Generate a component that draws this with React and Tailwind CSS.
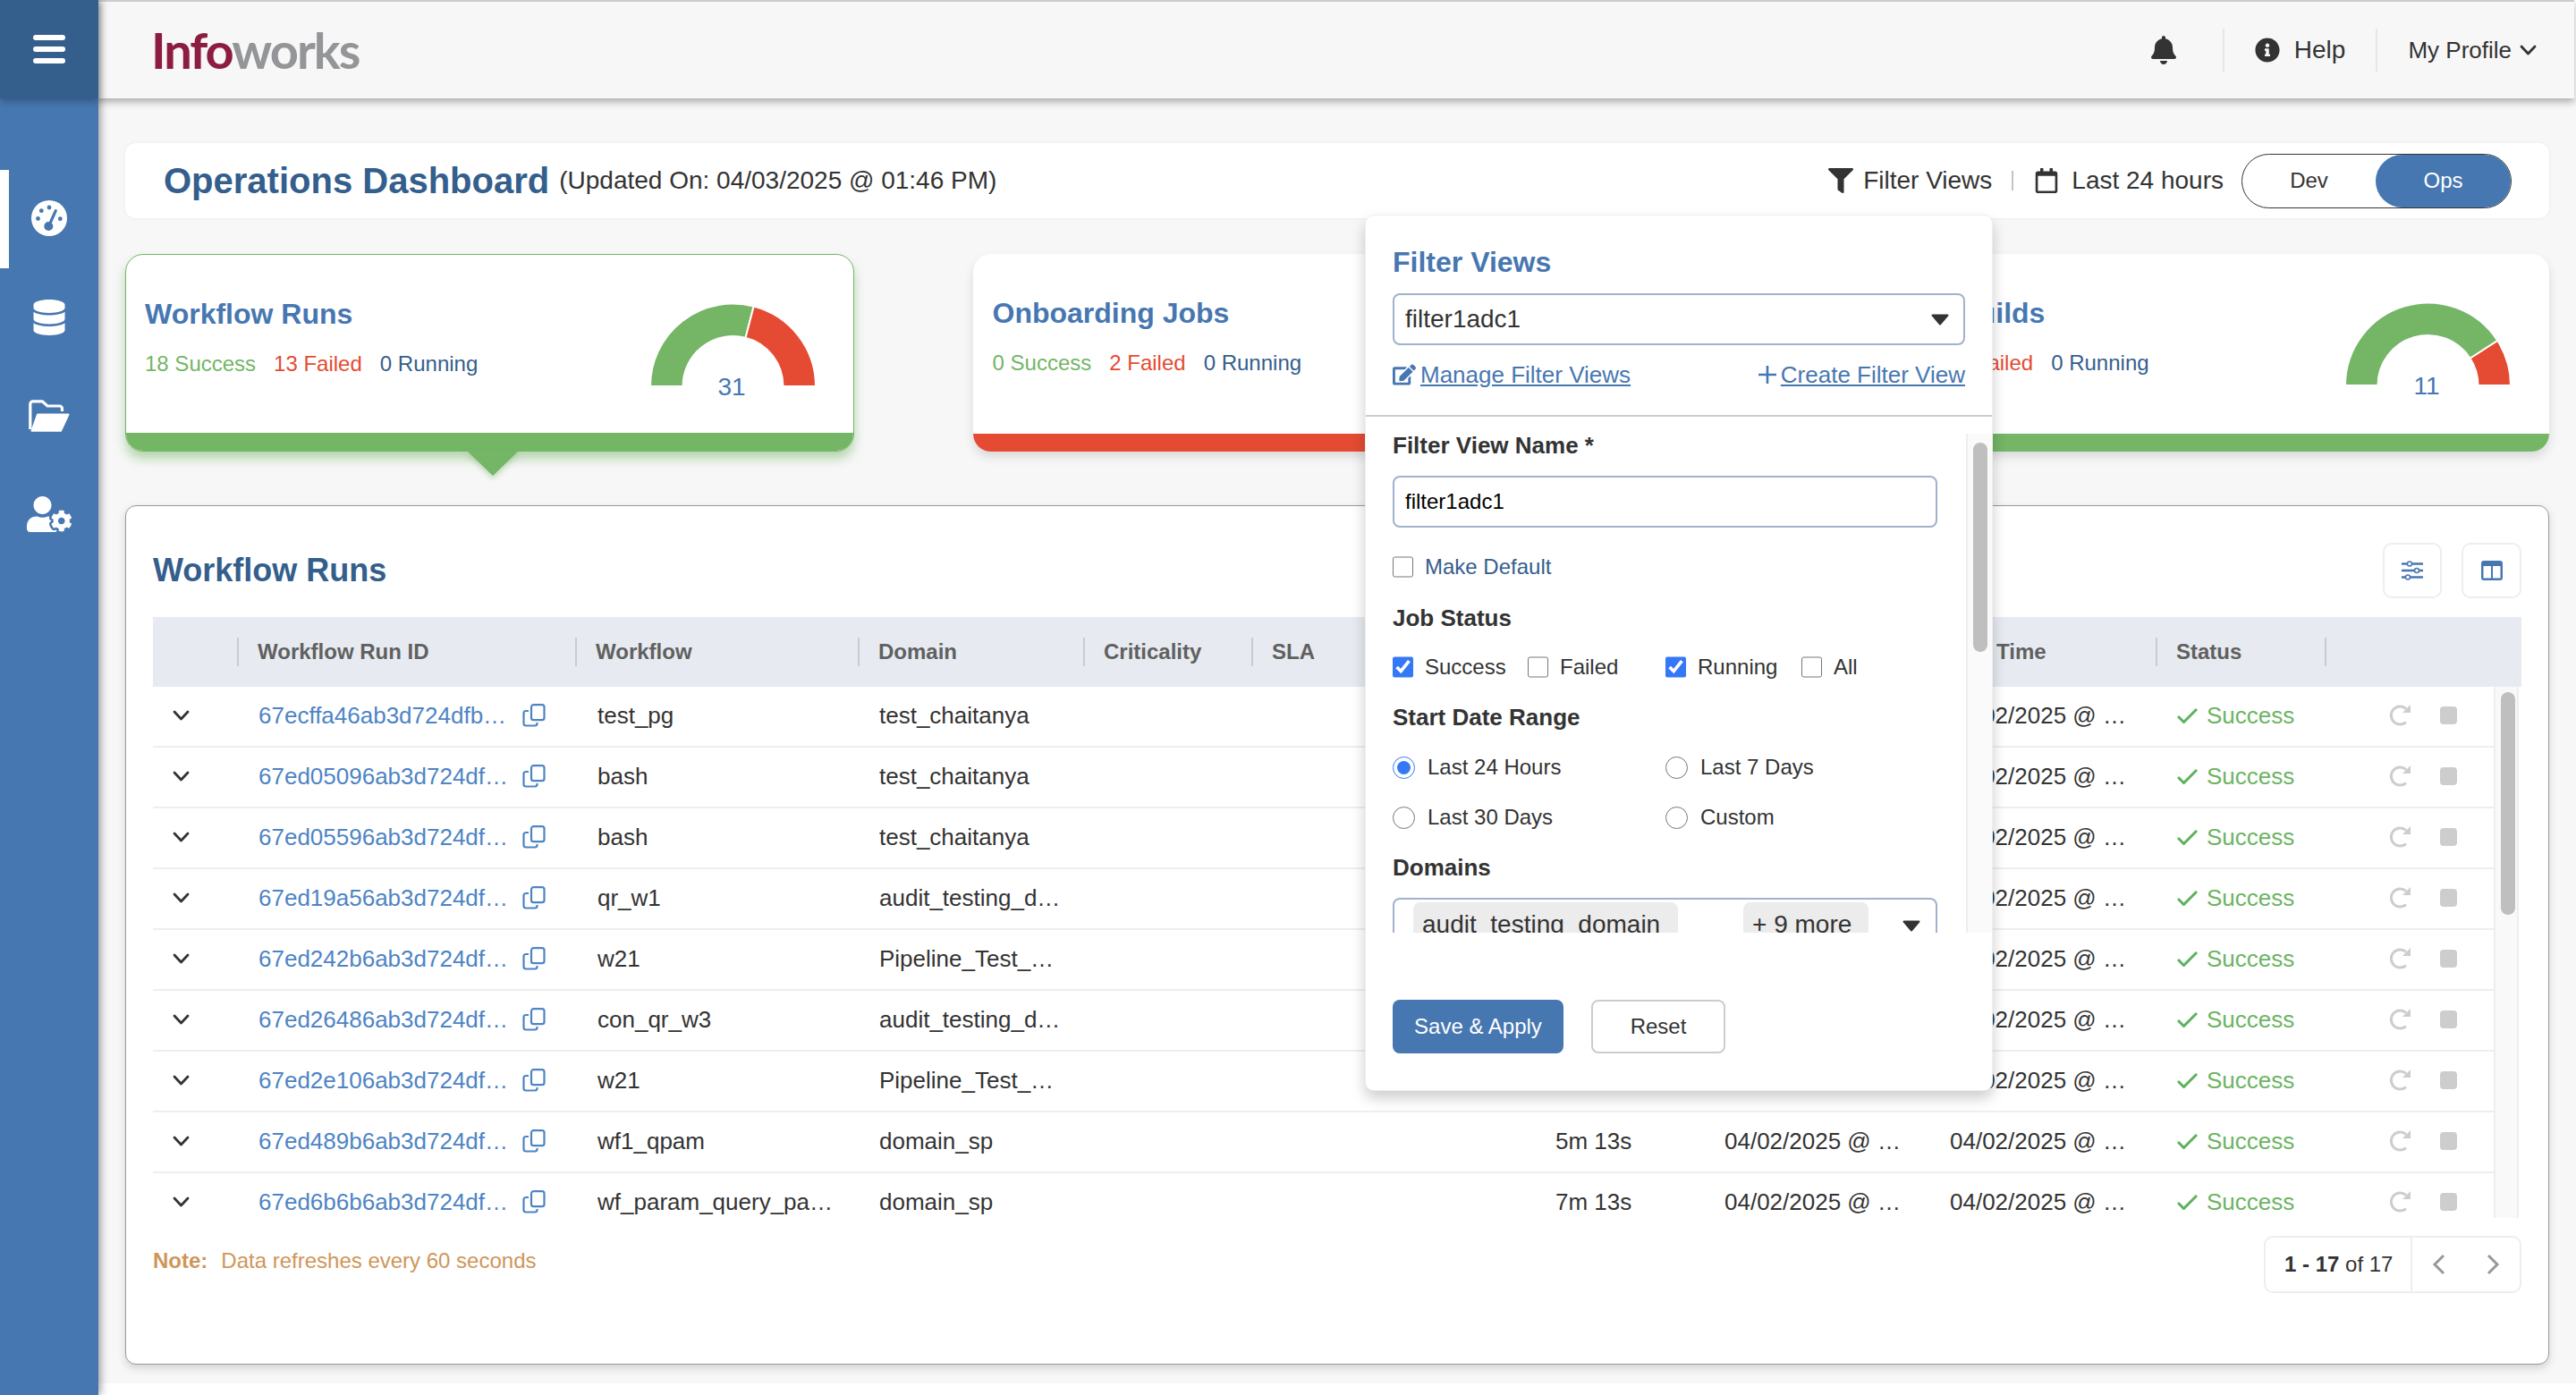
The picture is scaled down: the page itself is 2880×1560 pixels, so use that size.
import { FaBell, FaEdit, FaFilter, FaInfoCircle, FaRegCalendar, FaDatabase, FaUserCog } from "react-icons/fa";

const rows = [
  { id: "67ecffa46ab3d724dfb…", workflow: "test_pg", domain: "test_chaitanya" },
  { id: "67ed05096ab3d724df…", workflow: "bash", domain: "test_chaitanya" },
  { id: "67ed05596ab3d724df…", workflow: "bash", domain: "test_chaitanya" },
  { id: "67ed19a56ab3d724df…", workflow: "qr_w1", domain: "audit_testing_d…" },
  { id: "67ed242b6ab3d724df…", workflow: "w21", domain: "Pipeline_Test_…" },
  { id: "67ed26486ab3d724df…", workflow: "con_qr_w3", domain: "audit_testing_d…" },
  { id: "67ed2e106ab3d724df…", workflow: "w21", domain: "Pipeline_Test_…" },
  { id: "67ed489b6ab3d724df…", workflow: "wf1_qpam", domain: "domain_sp", duration: "5m 13s", start: "04/02/2025 @ …" },
  { id: "67ed6b6b6ab3d724df…", workflow: "wf_param_query_pa…", domain: "domain_sp", duration: "7m 13s", start: "04/02/2025 @ …" },
];

const columns = ["", "Workflow Run ID", "Workflow", "Domain", "Criticality", "SLA", "Duration", "Start Time", "End Time", "Status"];

const Gauge = ({ success, total }) => {
  const point = (r, frac) => {
    const a = Math.PI * (1 - frac);
    return `${92.5 + r * Math.cos(a)} ${92 - r * Math.sin(a)}`;
  };
  const arc = (from, to) =>
    `M${point(92.5, from)} A92.5 92.5 0 0 1 ${point(92.5, to)} L${point(56, to)} A56 56 0 0 0 ${point(56, from)} Z`;
  const f = success / total;
  return (
    <svg width="185" height="110" viewBox="0 0 185 110">
      {f > 0 && <path d={arc(0, f)} fill="#74b566" stroke="#fff" strokeWidth="2" />}
      {f < 1 && <path d={arc(f, 1)} fill="#e54b32" stroke="#fff" strokeWidth="2" />}
      <text x="91" y="102" textAnchor="middle" fontSize="28" fill="#4777b1">
        {total}
      </text>
    </svg>
  );
};

const KpiCard = ({ title, success, failed, running, active }) => {
  const ok = failed === 0 || success > failed;
  return (
    <div className="relative w-[815px] h-[221px]">
      <div
        className={`flex flex-col h-full bg-white rounded-[20px] overflow-hidden ${
          active ? "border border-[#74b566] shadow-[0_8px_12px_rgba(116,181,102,0.5)]" : "shadow-[0_6px_12px_rgba(0,0,0,0.12)]"
        }`}
      >
        <div className={`flex flex-1 justify-between ${active ? "pl-[21px] pr-[20px]" : "pl-[22px] pr-[21px]"}`}>
          <div className="pt-[48px]">
            <h3 className="text-[32px] leading-[36px] font-bold text-[#4777b1]">{title}</h3>
            <div className="flex gap-[20px] mt-[24px] text-[24px] leading-[28px]">
              <span className="text-[#74b566]">{success} Success</span>
              <span className="text-[#e54b32]">{failed} Failed</span>
              <span className="text-[#345e8c]">{running} Running</span>
            </div>
          </div>
          <div className="pt-[55px] mr-[22px]">
            <Gauge success={success} total={success + failed + running} />
          </div>
        </div>
        <div className={`h-[20px] ${ok ? "bg-[#74b566]" : "bg-[#e54b32]"}`}></div>
      </div>
      {active && (
        <div className="absolute left-[382px] top-[220px] w-0 h-0 border-l-[29px] border-r-[29px] border-t-[28px] border-l-transparent border-r-transparent border-t-[#74b566] drop-shadow-[0_3px_3px_rgba(116,181,102,0.5)]"></div>
      )}
    </div>
  );
};

const GaugeIcon = () => (
  <svg width="40" height="40" viewBox="0 0 40 40">
    <circle cx="20" cy="20" r="20" fill="#fff" />
    <g fill="#4777b1">
      <circle cx="7.500" cy="20.500" r="2.400" />
      <circle cx="11.300" cy="11.700" r="2.400" />
      <circle cx="20" cy="8" r="2.400" />
      <circle cx="32.300" cy="20.700" r="2.400" />
      <circle cx="19.300" cy="29" r="5" />
    </g>
    <path d="M19.500 29L27.300 11.700" stroke="#4777b1" strokeWidth="3.200" strokeLinecap="round" />
  </svg>
);

const FolderIcon = () => (
  <svg width="46" height="36" viewBox="0 0 46 36">
    <path d="M1.800 33V5a3 3 0 0 1 3-3.200h10.500l5.700 5.200h13.500a3 3 0 0 1 3 3V13" fill="none" stroke="#fff" strokeWidth="3.200" />
    <path d="M10 16.500H44.500L36 34.800H3.500z" fill="#fff" stroke="#fff" strokeWidth="2" strokeLinejoin="round" />
  </svg>
);

const CopyIcon = () => (
  <svg width="26" height="26" viewBox="0 0 26 26" fill="none" stroke="#4e84c4" strokeWidth="2.200">
    <rect x="10" y="1.200" width="14.500" height="17" rx="2.500" />
    <path d="M7 8H4a2.500 2.500 0 0 0-2.500 2.500V22a2.500 2.500 0 0 0 2.500 2.500h10a2.500 2.500 0 0 0 2.500-2.500v-1" />
  </svg>
);

const Chevron = ({ color = "#333" }) => (
  <svg width="19" height="12" viewBox="0 0 19 12" fill="none" stroke={color} strokeWidth="2.800" strokeLinecap="round" strokeLinejoin="round">
    <path d="M2 2l7.500 8L17 2" />
  </svg>
);

const RedoIcon = () => (
  <svg width="25" height="24" viewBox="0 0 25 24" fill="none" stroke="#cdcdcd" strokeWidth="3">
    <path d="M19 19.500A10 10 0 1 1 19 4.500" />
    <path d="M24 0v9h-9z" fill="#cdcdcd" stroke="none" />
  </svg>
);

const Caret = () => (
  <svg width="20" height="13" viewBox="0 0 20 13" fill="#333" stroke="#333" strokeWidth="2" strokeLinejoin="round">
    <path d="M1.500 1.500h17L10 11.500z" />
  </svg>
);

const Check = ({ label, checked, className = "" }) => (
  <label className={`flex items-center gap-[13px] text-[24px] leading-[24px] text-[#333] ${className}`}>
    <input type="checkbox" checked={!!checked} readOnly className="w-[23px] h-[24px] m-0 accent-[#3478f6]" />
    {label}
  </label>
);

const Radio = ({ label, checked }) => (
  <label className="flex items-center gap-[14px] text-[24px] leading-[26px] text-[#333]">
    <input type="radio" name="range" checked={!!checked} readOnly className="w-[25px] h-[25px] m-0 accent-[#3478f6]" />
    {label}
  </label>
);

const FilterPopover = () => (
  <div className="absolute left-[1416px] top-[130px] z-30 w-[702px] h-[980px] flex flex-col bg-white rounded-[10px] border border-[#eee] shadow-[0_8px_16px_rgba(0,0,0,0.2)]">
    <div className="h-[225px] shrink-0 px-[30px] pt-[34px] border-b-2 border-[#ccc]">
      <h3 className="text-[32px] leading-[36px] font-bold text-[#4777b1]">Filter Views</h3>
      <div className="flex items-center justify-between h-[58px] mt-[17px] pl-[12px] pr-[16px] border-2 border-[#a1b2cc] rounded-[8px] text-[28px] text-[#333]">
        filter1adc1
        <Caret />
      </div>
      <div className="flex justify-between mt-[18px] text-[26px] leading-[30px] text-[#4777b1]">
        <a className="flex items-center gap-[5px]">
          <FaEdit size={26} />
          <span className="underline">Manage Filter Views</span>
        </a>
        <a className="flex items-center gap-[4px]">
          <svg width="22" height="22" viewBox="0 0 22 22" stroke="#4777b1" strokeWidth="2.600">
            <path d="M11 1v20M1 11h20" />
          </svg>
          <span className="underline">Create Filter View</span>
        </a>
      </div>
    </div>
    <div className="flex h-[558px] shrink-0 mt-[19px] overflow-hidden">
      <div className="w-[671px] pl-[30px] text-[#333]">
        <div className="text-[26px] leading-[26px] font-bold">Filter View Name *</div>
        <div className="flex items-center w-[609px] h-[58px] mt-[21px] pl-[12px] border-2 border-[#a1b2cc] rounded-[8px] text-[24px] text-black">
          filter1adc1
        </div>
        <label className="flex items-center gap-[13px] mt-[32px] text-[24px] leading-[24px] text-[#345e8c]">
          <input type="checkbox" readOnly checked={false} className="w-[23px] h-[24px] m-0" />
          Make Default
        </label>
        <div className="mt-[32px] text-[26px] leading-[26px] font-bold">Job Status</div>
        <div className="flex mt-[30px]">
          <Check label="Success" checked className="w-[151px]" />
          <Check label="Failed" className="w-[154px]" />
          <Check label="Running" checked className="w-[152px]" />
          <Check label="All" />
        </div>
        <div className="mt-[31px] text-[26px] leading-[26px] font-bold">Start Date Range</div>
        <div className="grid grid-cols-[305px_1fr] gap-y-[30px] mt-[30px]">
          <Radio label="Last 24 Hours" checked />
          <Radio label="Last 7 Days" />
          <Radio label="Last 30 Days" />
          <Radio label="Custom" />
        </div>
        <div className="mt-[30px] text-[26px] leading-[26px] font-bold">Domains</div>
        <div className="flex w-[609px] h-[70px] mt-[21px] pt-[3px] pl-[21px] border-2 border-[#a1b2cc] rounded-[8px] text-[28px] leading-[50px] text-[#333]">
          <span className="w-[296px] h-[52px] pl-[10px] bg-[#ececec] rounded-[8px]">audit_testing_domain</span>
          <span className="w-[140px] h-[52px] ml-[73px] pl-[10px] bg-[#ececec] rounded-[8px]">+ 9 more</span>
          <div className="ml-[38px] pt-[20px]">
            <Caret />
          </div>
        </div>
      </div>
      <div className="flex-1 pl-[6px] pt-[10px] border-l-2 border-[#eee] bg-[#fafafa]">
        <div className="w-[16px] h-[234px] rounded-full bg-[#bfbfbf]"></div>
      </div>
    </div>
    <div className="flex gap-[31px] pl-[30px] pt-[75px]">
      <button className="w-[191px] h-[60px] rounded-[8px] bg-[#4777b1] text-[24px] text-white">Save &amp; Apply</button>
      <button className="w-[150px] h-[60px] rounded-[8px] border-2 border-[#ccc] bg-white text-[24px] text-[#333]">Reset</button>
    </div>
  </div>
);

const WorkflowTable = () => (
  <div>
    <div className="grid grid-cols-[96px_378px_316px_252px_188px_317px_189px_252px_253px_189px_1fr] items-center h-[78px] bg-[#e7ebf1] text-[24px] font-bold text-[#606060]">
      {columns.map((col, i) => (
        <div key={i} className="flex items-center justify-between h-[32px] border-r-2 border-[#c9ccd1] pl-[21px]">
          {col}
        </div>
      ))}
    </div>
    <div className="flex h-[594px] overflow-hidden">
      <div className="w-[2617px]">
        {rows.map((row) => (
          <div
            key={row.id}
            className="grid grid-cols-[96px_378px_316px_252px_188px_317px_189px_252px_253px_189px_1fr] items-center h-[68px] pb-[2px] border-b-2 border-[#eee] text-[26px] text-[#333]"
          >
            <div className="pl-[22px]">
              <Chevron />
            </div>
            <div className="flex items-center pl-[22px] gap-[15px] text-[#4e84c4]">
              <span className="w-[280px] whitespace-nowrap">{row.id}</span>
              <CopyIcon />
            </div>
            <div className="pl-[23px] whitespace-nowrap">{row.workflow}</div>
            <div className="pl-[22px] whitespace-nowrap">{row.domain}</div>
            <div></div>
            <div></div>
            <div className="pl-[21px]">{row.duration}</div>
            <div className="pl-[21px] whitespace-nowrap">{row.start}</div>
            <div className="pl-[21px] whitespace-nowrap">04/02/2025 @ …</div>
            <div className="flex items-center gap-[10px] pl-[22px] text-[#6cb463]">
              <svg width="23" height="17" viewBox="0 0 23 17" fill="none" stroke="#5cb25d" strokeWidth="3">
                <path d="M1 9l6.500 6.500L22 1" />
              </svg>
              Success
            </div>
            <div className="flex items-center pl-[70px] gap-[32px]">
              <RedoIcon />
              <div className="w-[19px] h-[20px] rounded-[4px] bg-[#cdcdcd]"></div>
            </div>
          </div>
        ))}
      </div>
      <div className="w-[28px] pl-[6px] pt-[6px] border-x-2 border-[#eee] bg-[#f9f9f9]">
        <div className="w-[16px] h-[249px] rounded-full bg-[#bfbfbf]"></div>
      </div>
    </div>
  </div>
);

const App = () => {
  return (
    <div className="flex w-[2880px] h-[1560px] overflow-hidden bg-white font-['Liberation_Sans',Arial,sans-serif]">
      <aside className="relative z-20 w-[110px] shrink-0 bg-[#4777b1] text-white shadow-[3px_0_8px_rgba(0,0,0,0.35)]">
        <div className="flex flex-col justify-center gap-[7px] h-[110px] px-[37px] bg-[#345e8c] shadow-[0_4px_8px_rgba(0,0,0,0.25)]">
          <div className="h-[6px] rounded-full bg-white"></div>
          <div className="h-[6px] rounded-full bg-white"></div>
          <div className="h-[6px] rounded-full bg-white"></div>
        </div>
        <nav className="pt-[80px]">
          <div className="flex items-center justify-center h-[110px] border-l-[10px] border-white pr-[10px] pb-[2px]">
            <GaugeIcon />
          </div>
          <div className="flex items-center justify-center h-[110px]">
            <FaDatabase size={40} />
          </div>
          <div className="flex items-center justify-center h-[110px]">
            <FolderIcon />
          </div>
          <div className="flex items-center justify-center h-[110px]">
            <FaUserCog size={50} />
          </div>
        </nav>
      </aside>
      <main className="flex-1 flex flex-col min-w-0">
        <header className="relative z-10 flex items-center justify-between h-[110px] shrink-0 mr-[2px] pl-[59px] pr-[42px] border-t-2 border-[#ccc] bg-[#f7f7f7] shadow-[0_4px_8px_rgba(0,0,0,0.3)]">
          <div className="font-['Lato',sans-serif] font-bold text-[56px] leading-[60px] tracking-[-2px] text-[#939598]">
            <span className="text-[#8d1c41]">Info</span>works
          </div>
          <div className="flex items-center text-[#333]">
            <FaBell size={32} />
            <div className="w-[2px] h-[48px] ml-[50px] bg-[#e6e6e6]"></div>
            <FaInfoCircle size={28} className="ml-[34px]" />
            <span className="ml-[16px] text-[28px]">Help</span>
            <div className="w-[2px] h-[48px] ml-[34px] bg-[#e6e6e6]"></div>
            <span className="ml-[34px] text-[26px]">My Profile</span>
            <div className="ml-[9px]">
              <Chevron />
            </div>
          </div>
        </header>
        <div className="relative h-[1437px] shrink-0 px-[30px] pt-[50px] bg-[#f7f7f7]">
          <div className="flex items-center justify-between h-[84px] pl-[43px] pr-[42px] bg-white rounded-[12px] shadow-[0_0_4px_rgba(0,0,0,0.05)]">
            <div className="flex items-center gap-[11px]">
              <h1 className="text-[40px] font-bold text-[#345e8c]">Operations Dashboard</h1>
              <span className="text-[28px] text-[#333]">(Updated On: 04/03/2025 @ 01:46 PM)</span>
            </div>
            <div className="flex items-center text-[28px] text-[#333]">
              <FaFilter size={28} />
              <span className="ml-[11px]">Filter Views</span>
              <div className="w-[2px] h-[22px] ml-[22px] bg-[#c4c4c4]"></div>
              <FaRegCalendar size={28} className="ml-[23px]" />
              <span className="ml-[14px]">Last 24 hours</span>
              <div className="flex w-[302px] h-[61px] ml-[20px] border border-[#333] rounded-full text-[24px]">
                <div className="flex flex-1 items-center justify-center">Dev</div>
                <div className="flex items-center justify-center w-[151px] rounded-full bg-[#4777b1] text-white">Ops</div>
              </div>
            </div>
          </div>
          <div className="flex justify-between mt-[40px]">
            <KpiCard title="Workflow Runs" success={18} failed={13} running={0} active />
            <KpiCard title="Onboarding Jobs" success={0} failed={2} running={0} />
            <KpiCard title="Pipeline Builds" success={9} failed={2} running={0} />
          </div>
          <section className="h-[961px] mt-[60px] px-[30px] bg-white border border-[#999] rounded-[12px] shadow-[0_4px_10px_rgba(0,0,0,0.15)]">
            <div className="flex items-center justify-between pt-[41px] pb-[21px]">
              <h2 className="text-[36px] font-bold text-[#345e8c]">Workflow Runs</h2>
              <div className="flex gap-[22px]">
                <button className="flex items-center justify-center w-[66px] h-[62px] border-2 border-[#eee] rounded-[10px]">
                  <svg width="24" height="22" viewBox="0 0 24 22" fill="#fff" stroke="#4777b1" strokeWidth="2.500">
                    <path d="M0 3.500h24M0 11h24M0 18.500h24" />
                    <circle cx="9" cy="3.500" r="2.500" strokeWidth="1.500" />
                    <circle cx="17" cy="11" r="2.500" strokeWidth="1.500" />
                    <circle cx="7" cy="18.500" r="2.500" strokeWidth="1.500" />
                  </svg>
                </button>
                <button className="flex items-center justify-center w-[67px] h-[62px] border-2 border-[#eee] rounded-[10px]">
                  <svg width="24" height="22" viewBox="0 0 24 22">
                    <rect width="24" height="22" rx="3" fill="#4777b1" />
                    <rect x="2.500" y="6" width="8.500" height="13.500" fill="#fff" />
                    <rect x="13" y="6" width="8.500" height="13.500" fill="#fff" />
                  </svg>
                </button>
              </div>
            </div>
            <WorkflowTable />
            <div className="flex items-start justify-between mt-[20px]">
              <div className="flex gap-[15px] mt-[14px] text-[24px] leading-[28px] text-[#cf9659]">
                <span className="font-bold">Note:</span>
                <span>Data refreshes every 60 seconds</span>
              </div>
              <div className="flex items-center w-[288px] h-[64px] border-2 border-[#eee] rounded-[10px] text-[24px] text-[#333]">
                <div className="flex items-center h-full w-[164px] pl-[21px] border-r-2 border-[#eee]">
                  <b>1 - 17</b>&nbsp;of 17
                </div>
                <div className="flex flex-1 items-center justify-between px-[22px]">
                  <svg width="15" height="24" viewBox="0 0 15 24" fill="none" stroke="#999" strokeWidth="3">
                    <path d="M13 2L3 12l10 10" />
                  </svg>
                  <svg width="15" height="24" viewBox="0 0 15 24" fill="none" stroke="#999" strokeWidth="3">
                    <path d="M2 2l10 10L2 22" />
                  </svg>
                </div>
              </div>
            </div>
          </section>
          <FilterPopover />
        </div>
      </main>
    </div>
  );
};

export default App;
